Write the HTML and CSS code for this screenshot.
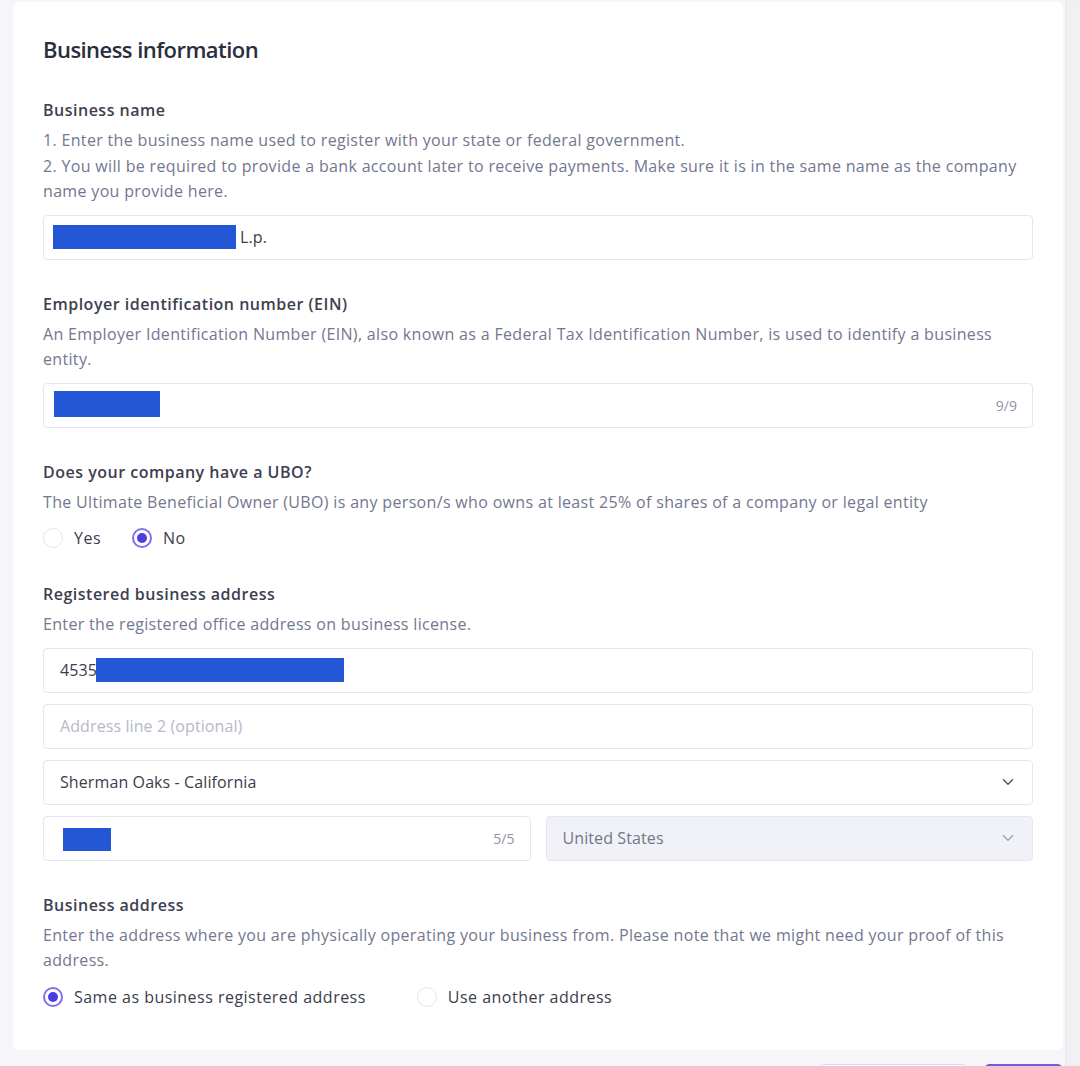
FILE: index.html
```html
<!DOCTYPE html>
<html lang="en">
<head>
<meta charset="utf-8">
<title>Business information</title>
<link rel="stylesheet" href="styles.css">
</head>
<body>
<div class="page">
  <main class="main">
    <section class="card">
      <h1 class="title">Business information</h1>

      <div class="field">
        <div class="label">Business name</div>
        <div class="desc">1. Enter the business name used to register with your state or federal government.<br>2. You will be required to provide a bank account later to receive payments. Make sure it is in the same name as the company name you provide here.</div>
        <div class="input"><span class="redact redact-name"></span><span class="val">L.p.</span></div>
      </div>

      <div class="field">
        <div class="label">Employer identification number (EIN)</div>
        <div class="desc">An Employer Identification Number (EIN), also known as a Federal Tax Identification Number, is used to identify a business entity.</div>
        <div class="input"><span class="redact redact-ein"></span><span class="grow"></span><span class="count">9/9</span></div>
      </div>

      <div class="field">
        <div class="label">Does your company have a UBO?</div>
        <div class="desc">The Ultimate Beneficial Owner (UBO) is any person/s who owns at least 25% of shares of a company or legal entity</div>
        <div class="radios radios-ubo">
          <div class="radio"><span class="dot"></span><span class="rlabel">Yes</span></div>
          <div class="radio on"><span class="dot"></span><span class="rlabel">No</span></div>
        </div>
      </div>

      <div class="field">
        <div class="label">Registered business address</div>
        <div class="desc">Enter the registered office address on business license.</div>
        <div class="stack">
          <div class="input"><span class="val">4535</span><span class="redact redact-addr"></span></div>
          <div class="input"><span class="ph">Address line 2 (optional)</span></div>
          <div class="input select"><span class="val">Sherman Oaks - California</span><span class="grow"></span>
            <svg class="chev" width="12" height="8" viewBox="0 0 12 8"><path d="M1.5 1.8 6 6.2 10.5 1.8" fill="none" stroke="#555866" stroke-width="1.5" stroke-linecap="round" stroke-linejoin="round"/></svg>
          </div>
          <div class="row2">
            <div class="input"><span class="redact redact-zip"></span><span class="grow"></span><span class="count">5/5</span></div>
            <div class="input select disabled"><span class="val">United States</span><span class="grow"></span>
              <svg class="chev" width="12" height="8" viewBox="0 0 12 8"><path d="M1.5 1.8 6 6.2 10.5 1.8" fill="none" stroke="#a2a5b6" stroke-width="1.5" stroke-linecap="round" stroke-linejoin="round"/></svg>
            </div>
          </div>
        </div>
      </div>

      <div class="field">
        <div class="label">Business address</div>
        <div class="desc">Enter the address where you are physically operating your business from. Please note that we might need your proof of this address.</div>
        <div class="radios radios-addr">
          <div class="radio on"><span class="dot"></span><span class="rlabel">Same as business registered address</span></div>
          <div class="radio"><span class="dot"></span><span class="rlabel">Use another address</span></div>
        </div>
      </div>
    </section>
    <div class="footer">
      <button class="btn btn-outline"></button>
      <button class="btn btn-primary"></button>
    </div>
  </main>
  <div class="track"></div>
</div>
</body>
</html>
```

FILE: styles.css
```css
* { box-sizing: border-box; }
html, body { margin: 0; padding: 0; }
body {
  background: #f6f6fa;
  font-family: "Open Sans", "Liberation Sans", sans-serif;
  color: #3a3d4c;
  overflow: hidden;
  height: 1066px;
}
.page {
  display: flex;
  height: 1066px;
}
.main {
  width: 1065px;
  padding: 2px 2px 0 13px;
  display: flex;
  flex-direction: column;
}
.track {
  flex: 1;
  background: #f1f1f3;
  box-shadow: inset 2px 0 3px rgba(0,0,0,0.03);
}
.card {
  background: #ffffff;
  border-radius: 6px;
  padding: 33px 30px 42px 30px;
  display: flex;
  flex-direction: column;
  gap: 34px;
  flex: none;
}
.title {
  margin: 0 0 3px 0;
  font-size: 22px;
  line-height: 28px;
  font-weight: 600;
  color: #2a2d3e;
  letter-spacing: -0.55px;
}
.field {
  display: flex;
  flex-direction: column;
}
.label {
  font-size: 16px;
  line-height: 20px;
  font-weight: 600;
  color: #3d4050;
  letter-spacing: 0.5px;
}
.desc {
  margin-top: 8px;
  font-size: 16px;
  line-height: 25.5px;
  color: #737790;
  letter-spacing: 0.33px;
}
.desc + .input, .desc + .stack { margin-top: 10px; }
.desc + .radios { margin-top: 12px; }
.input {
  height: 45px;
  border: 1px solid #e4e6f1;
  border-radius: 4px;
  background: #fff;
  display: flex;
  align-items: center;
  padding: 0 15px 0 16px;
  font-size: 16px;
  letter-spacing: 0.1px;
  color: #3a3d4c;
}
.stack {
  display: flex;
  flex-direction: column;
  gap: 11px;
}
.row2 {
  display: grid;
  grid-template-columns: 1fr 1fr;
  gap: 15px;
}
.grow { flex: 1; }
.count {
  font-size: 14px;
  letter-spacing: 0;
  color: #8f93a6;
}
.ph { color: #b6b9c9; }
.select { padding-right: 18px; }
.disabled { background: #f1f2f7; color: #727689; }
.chev { display: block; }
.redact {
  display: inline-block;
  background: #2457d6;
  flex: none;
}
.redact-name { width: 183px; height: 24px; margin-left: -7px; margin-right: 4px; }
.redact-ein { width: 106px; height: 26px; margin-left: -6px; margin-top: -3px; }
.redact-addr { width: 248px; height: 24px; margin-left: -1px; }
.redact-zip { width: 48px; height: 23px; margin-top: 3px; margin-left: 3px; }
.radios {
  display: flex;
  align-items: center;
  height: 22px;
}
.radios-ubo { margin-bottom: 1px; }
.radio {
  display: flex;
  align-items: center;
  font-size: 16px;
  letter-spacing: 0.48px;
  color: #3a3d4c;
}
.radios-ubo .radio { margin-right: 31px; }
.radios-addr .radio { margin-right: 51px; }
.dot {
  width: 20px;
  height: 20px;
  border-radius: 50%;
  border: 1px solid #e2e4ef;
  background: #fff;
  margin-right: 11px;
  position: relative;
  flex: none;
}
.radio.on .dot {
  border: 2px solid #7e70f2;
}
.radio.on .dot::after {
  content: "";
  position: absolute;
  left: 3px; top: 3px;
  width: 10px; height: 10px;
  border-radius: 50%;
  background: #4c3ce3;
}
.footer {
  display: flex;
  justify-content: flex-end;
  gap: 19px;
  margin-top: 14px;
  padding-right: 1px;
  flex: none;
}
.btn {
  height: 40px;
  border-radius: 4px;
  font-family: inherit;
  font-size: 15px;
  font-weight: 600;
}
.btn-outline {
  width: 146px;
  background: #fff;
  border: 1px solid #d9d9ea;
  color: #3d4050;
}
.btn-primary {
  width: 77px;
  background: #6c5ce7;
  border: 1px solid #6c5ce7;
  color: #fff;
}
```
